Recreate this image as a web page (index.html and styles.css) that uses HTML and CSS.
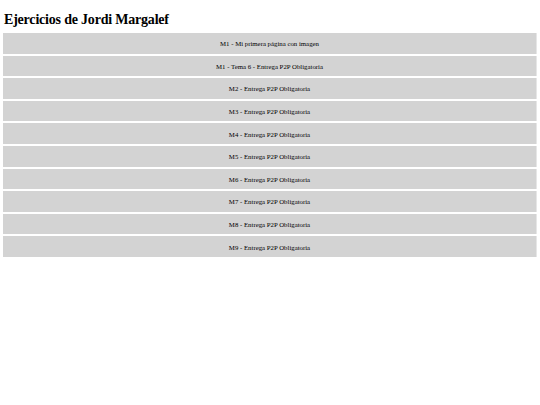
FILE: index.html
```html
<!DOCTYPE html>
<html lang="es">
<head>
<meta charset="utf-8">
<title>Ejercicios de Jordi Margalef</title>
<link rel="stylesheet" href="styles.css">
</head>
<body>
<h1 class="title">Ejercicios de Jordi Margalef</h1>
<div class="list">
  <a class="item">M1 - Mi primera página con imagen</a>
  <a class="item">M1 - Tema 6 - Entrega P2P Obligatoria</a>
  <a class="item">M2 - Entrega P2P Obligatoria</a>
  <a class="item">M3 - Entrega P2P Obligatoria</a>
  <a class="item">M4 - Entrega P2P Obligatoria</a>
  <a class="item">M5 - Entrega P2P Obligatoria</a>
  <a class="item">M6 - Entrega P2P Obligatoria</a>
  <a class="item">M7 - Entrega P2P Obligatoria</a>
  <a class="item">M8 - Entrega P2P Obligatoria</a>
  <a class="item">M9 - Entrega P2P Obligatoria</a>
</div>
</body>
</html>
```
FILE: styles.css
```css
html, body {
  margin: 0;
  padding: 0;
  background: #fff;
}
body {
  padding: 0 3px;
  font-family: "Liberation Serif", "Times New Roman", serif;
  color: #000;
}
.title {
  margin: 0;
  padding: 13px 1px 0;
  height: 20px;
  font-size: 14px;
  line-height: 14px;
  letter-spacing: -0.2px;
  font-weight: bold;
}
.list {
  display: flex;
  flex-direction: column;
  gap: 2px;
}
.item {
  display: flex;
  align-items: center;
  justify-content: center;
  height: 20.6px;
  width: 534px;
  box-sizing: border-box;
  padding-top: 1px;
  background: #d3d3d3;
  border-right: 1px solid #e6e6e6;
  font-size: 6.8px;
  color: #000;
}
```
